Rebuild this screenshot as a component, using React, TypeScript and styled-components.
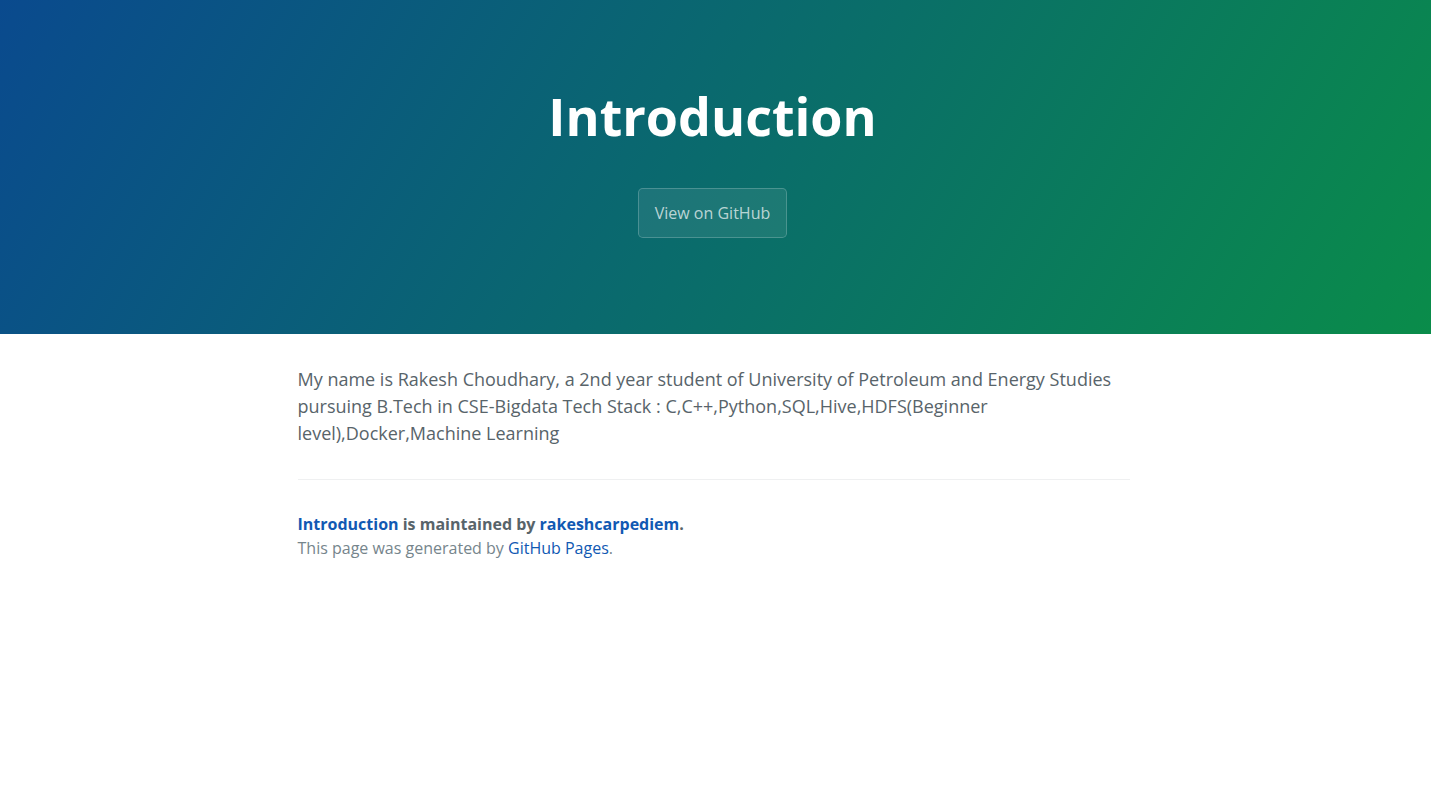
import styled, { createGlobalStyle } from 'styled-components';

const GlobalStyle = createGlobalStyle`
  * {
    box-sizing: border-box;
  }

  body {
    margin: 0;
    padding: 0;
    font-family: "Open Sans", "Helvetica Neue", Helvetica, Arial, sans-serif;
    font-size: 16px;
    line-height: 1.5;
    color: #58646a;
    background: #fff;
  }
`;

const PageHeader = styled.section`
  color: #fff;
  text-align: center;
  background-color: #0b7b6b;
  background-image: linear-gradient(120deg, #0a4a8e, #0a8c4a);
  padding: 77px 99px 80px 93px;
`;

const ProjectName = styled.h1`
  margin: 0 0 33px;
  font-size: 3.25rem;
  font-weight: 700;
  line-height: 1.5;
`;

const Btn = styled.a`
  display: inline-block;
  margin-bottom: 1rem;
  padding: 0.75rem 1rem;
  color: rgba(255, 255, 255, 0.7);
  background-color: rgba(255, 255, 255, 0.08);
  border: 1px solid rgba(255, 255, 255, 0.2);
  border-radius: 0.3rem;
  font-size: 1rem;
  text-decoration: none;
`;

const MainContent = styled.section`
  max-width: 1028px;
  margin: 0 auto;
  padding: 2rem 100px 2rem 96px;
  font-size: 18px;
  word-wrap: break-word;
`;

const Paragraph = styled.p`
  margin: 0 0 1rem;
`;

const Footer = styled.footer`
  margin-top: 2rem;
  padding-top: 2rem;
  border-top: 1px solid #eff0f1;
  font-size: 16px;
`;

const Owner = styled.span`
  display: block;
  font-weight: 700;
`;

const Credits = styled.span`
  color: #76858c;
`;

const Link = styled.a`
  color: #1159b3;
  text-decoration: none;
`;

const App = () => {
  return (
    <>
      <GlobalStyle />
      <PageHeader>
        <ProjectName>Introduction</ProjectName>
        <Btn href="#">View on GitHub</Btn>
      </PageHeader>
      <MainContent>
        <Paragraph>
          My name is Rakesh Choudhary, a 2nd year student of University of Petroleum and Energy
          Studies pursuing B.Tech in CSE-Bigdata Tech Stack : C,C++,Python,SQL,Hive,HDFS(Beginner
          level),Docker,Machine Learning
        </Paragraph>
        <Footer>
          <Owner>
            <Link href="#">Introduction</Link> is maintained by <Link href="#">rakeshcarpediem</Link>.
          </Owner>
          <Credits>
            This page was generated by <Link href="#">GitHub Pages</Link>.
          </Credits>
        </Footer>
      </MainContent>
    </>
  );
};

export default App;
